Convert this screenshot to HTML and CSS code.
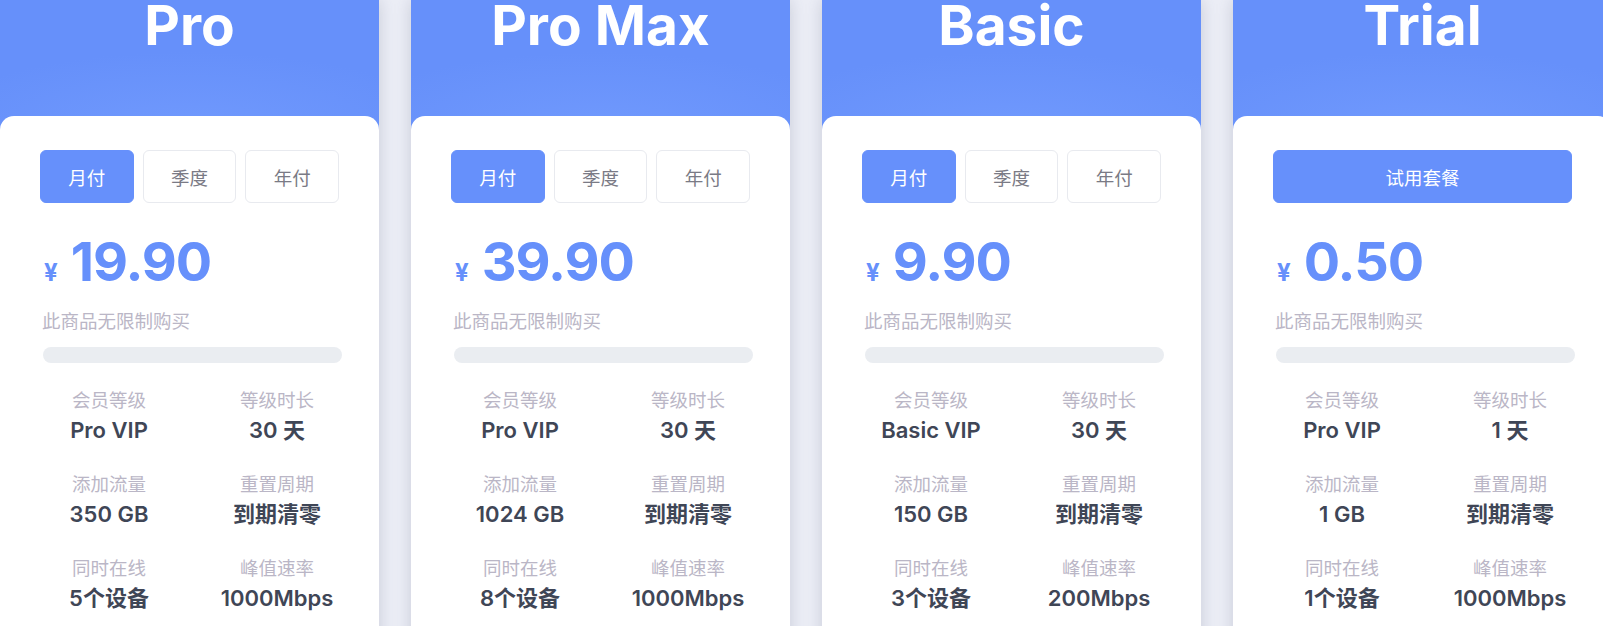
FILE: index.html
```html
<!DOCTYPE html>
<html lang="zh-CN">
<head>
    <meta charset="UTF-8">
    <meta name="viewport" content="width=device-width, initial-scale=1.0">
    <title>套餐购买</title>
    <link rel="stylesheet" href="styles.css">
</head>
<body>
    <div class="plans">
        <div class="plan">
            <div class="plan-head"><h2>Pro</h2></div>
            <div class="plan-body">
                <div class="cycles">
                    <button class="active">月付</button>
                    <button>季度</button>
                    <button>年付</button>
                </div>
                <div class="price"><span class="cur">¥</span>19.90</div>
                <p class="note">此商品无限制购买</p>
                <div class="bar"></div>
                <div class="specs">
                    <div class="spec"><span>会员等级</span><strong>Pro VIP</strong></div>
                    <div class="spec"><span>等级时长</span><strong>30 天</strong></div>
                    <div class="spec"><span>添加流量</span><strong>350 GB</strong></div>
                    <div class="spec"><span>重置周期</span><strong>到期清零</strong></div>
                    <div class="spec"><span>同时在线</span><strong>5个设备</strong></div>
                    <div class="spec"><span>峰值速率</span><strong>1000Mbps</strong></div>
                </div>
            </div>
        </div>

        <div class="plan">
            <div class="plan-head"><h2>Pro Max</h2></div>
            <div class="plan-body">
                <div class="cycles">
                    <button class="active">月付</button>
                    <button>季度</button>
                    <button>年付</button>
                </div>
                <div class="price"><span class="cur">¥</span>39.90</div>
                <p class="note">此商品无限制购买</p>
                <div class="bar"></div>
                <div class="specs">
                    <div class="spec"><span>会员等级</span><strong>Pro VIP</strong></div>
                    <div class="spec"><span>等级时长</span><strong>30 天</strong></div>
                    <div class="spec"><span>添加流量</span><strong>1024 GB</strong></div>
                    <div class="spec"><span>重置周期</span><strong>到期清零</strong></div>
                    <div class="spec"><span>同时在线</span><strong>8个设备</strong></div>
                    <div class="spec"><span>峰值速率</span><strong>1000Mbps</strong></div>
                </div>
            </div>
        </div>

        <div class="plan">
            <div class="plan-head"><h2>Basic</h2></div>
            <div class="plan-body">
                <div class="cycles">
                    <button class="active">月付</button>
                    <button>季度</button>
                    <button>年付</button>
                </div>
                <div class="price"><span class="cur">¥</span>9.90</div>
                <p class="note">此商品无限制购买</p>
                <div class="bar"></div>
                <div class="specs">
                    <div class="spec"><span>会员等级</span><strong>Basic VIP</strong></div>
                    <div class="spec"><span>等级时长</span><strong>30 天</strong></div>
                    <div class="spec"><span>添加流量</span><strong>150 GB</strong></div>
                    <div class="spec"><span>重置周期</span><strong>到期清零</strong></div>
                    <div class="spec"><span>同时在线</span><strong>3个设备</strong></div>
                    <div class="spec"><span>峰值速率</span><strong>200Mbps</strong></div>
                </div>
            </div>
        </div>

        <div class="plan">
            <div class="plan-head"><h2>Trial</h2></div>
            <div class="plan-body">
                <div class="cycles">
                    <button class="active">试用套餐</button>
                </div>
                <div class="price"><span class="cur">¥</span>0.50</div>
                <p class="note">此商品无限制购买</p>
                <div class="bar"></div>
                <div class="specs">
                    <div class="spec"><span>会员等级</span><strong>Pro VIP</strong></div>
                    <div class="spec"><span>等级时长</span><strong>1 天</strong></div>
                    <div class="spec"><span>添加流量</span><strong>1 GB</strong></div>
                    <div class="spec"><span>重置周期</span><strong>到期清零</strong></div>
                    <div class="spec"><span>同时在线</span><strong>1个设备</strong></div>
                    <div class="spec"><span>峰值速率</span><strong>1000Mbps</strong></div>
                </div>
            </div>
        </div>
    </div>
</body>
</html>
```

FILE: styles.css
```css
body {
    margin: 0;
    background: #eceef6;
    font-family: "Inter", "Noto Sans CJK SC", sans-serif;
    overflow: hidden;
}
.plans {
    display: flex;
    gap: 32px;
}
.plan {
    flex: 0 0 379px;
    background: #fff;
    box-shadow: 0 0 16px rgba(70, 78, 110, 0.22);
}
.plan-head {
    height: 130px;
    background: radial-gradient(ellipse 70% 60% at 50% 100%, #7099fd 0%, #6690fa 100%);
}
.plan-head h2 {
    margin: 0;
    color: #fff;
    font-size: 55px;
    line-height: 50px;
    font-weight: 700;
    text-align: center;
}
.plan-body {
    margin-top: -14px;
    position: relative;
    background: #fff;
    border-radius: 14px 14px 0 0;
    padding: 34px 0 40px;
}
.cycles {
    display: flex;
    gap: 9px;
    padding: 0 40px;
}
.cycles button {
    flex: 1;
    height: 53px;
    background: #fff;
    border: 1px solid #e8eaef;
    border-radius: 6px;
    color: #7a7a85;
    font-family: inherit;
    font-size: 18.5px;
    cursor: pointer;
}
.cycles button.active {
    background: #6690fb;
    border-color: #6690fb;
    color: #fff;
}
.price {
    margin: 29px 0 0;
    padding: 0 37px 0 44px;
    color: #6690fb;
    font-size: 54px;
    line-height: 60px;
    font-weight: 700;
    letter-spacing: -1px;
}
.price .cur {
    font-size: 24px;
    margin-right: 13px;
    letter-spacing: 0;
}
.note {
    margin: 5px 0 0;
    padding: 0 37px 0 42px;
    color: #bab6c6;
    font-size: 18.5px;
    line-height: 26px;
}
.bar {
    margin: 13px 37px 0 43px;
    height: 16px;
    border-radius: 8px;
    background: #eaedf1;
}
.specs {
    display: grid;
    grid-template-columns: 1fr 1fr;
    row-gap: 26px;
    margin-top: 24px;
    padding: 0 18px 0 25px;
    text-align: center;
}
.spec span {
    display: block;
    color: #bab6c6;
    font-size: 18.5px;
    line-height: 26px;
}
.spec strong {
    display: block;
    margin-top: 2px;
    color: #3f4656;
    font-size: 22px;
    line-height: 30px;
    font-weight: 600;
}
```
